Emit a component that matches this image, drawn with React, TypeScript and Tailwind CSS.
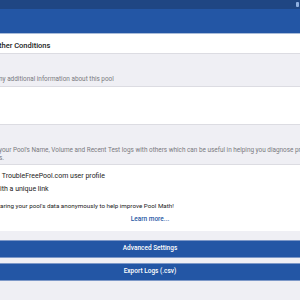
import React from 'react';

const Divider = () => <div className="h-px w-full shrink-0 bg-[#dcdce2]" />;

export default function App() {
  return (
    <div className="flex h-[300px] w-[300px] flex-col overflow-hidden bg-[#efeff4] font-['Roboto','Liberation_Sans',sans-serif] text-[#222]">
      {/* status bar */}
      <div className="flex h-[9px] shrink-0 items-center justify-end bg-[#1f4683] pr-[1px]">
        <div className="h-[5px] w-[3px] rounded-[1px] bg-[#8fb0e0]" />
      </div>
      {/* app bar */}
      <div className="h-[25px] shrink-0 border-b border-[#a9bcd9] bg-[#2356a5]" />

      {/* weather conditions */}
      <div className="flex h-[19px] shrink-0 items-center bg-white pt-[4px]">
        <span className="-ml-[1px] whitespace-nowrap text-[7.5px] font-medium leading-[10px]">ther Conditions</span>
      </div>
      <Divider />
      <div className="flex h-[32px] shrink-0 items-end pb-[3px]">
        <span className="-ml-[1px] whitespace-nowrap text-[6.4px] leading-[8px] text-[#7a7a80]">
          ny additional information about this pool
        </span>
      </div>
      <Divider />
      {/* notes */}
      <div className="h-[37px] shrink-0 bg-white" />
      <Divider />
      <div className="flex h-[39px] shrink-0 flex-col justify-end overflow-hidden pb-[2px] text-[6.4px] leading-[8px] text-[#7a7a80]">
        <span className="-ml-[1px] whitespace-nowrap">
          your Pool's Name, Volume and Recent Test logs with others which can be useful in helping you diagnose probl
        </span>
        <span className="-ml-[1px] whitespace-nowrap">s.</span>
      </div>
      <Divider />

      {/* sharing */}
      <div className="flex h-[66px] shrink-0 flex-col bg-white pt-[5px]">
        <span className="whitespace-nowrap text-[7px] leading-[13px]">&nbsp;TroubleFreePool.com user profile</span>
        <span className="whitespace-nowrap text-[7px] leading-[13px]">ith a unique link</span>
        <span className="mt-[6px] whitespace-nowrap text-[6.25px] leading-[8px]">
          aring your pool's data anonymously to help improve Pool Math!
        </span>
        <span className="mt-[5px] text-center text-[6.5px] font-medium leading-[8px] text-[#2a5aa6]">Learn more...</span>
      </div>

      {/* actions */}
      <div className="flex flex-col gap-[5px] pt-[9px]">
        <button className="flex h-[18px] w-full items-center justify-center border-y border-[#7d98c8] bg-[#2356a5] text-[6.5px] font-medium text-white">
          Advanced Settings
        </button>
        <button className="flex h-[18px] w-full items-center justify-center border-y border-[#7d98c8] bg-[#2356a5] text-[6.5px] font-medium text-white">
          Export Logs (.csv)
        </button>
      </div>
    </div>
  );
}
